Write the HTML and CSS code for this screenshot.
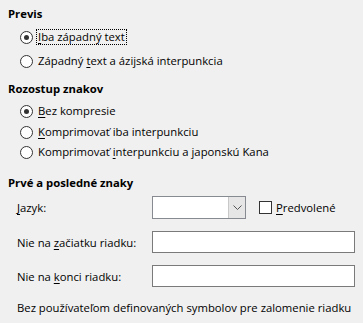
FILE: index.html
```html
<!DOCTYPE html>
<html lang="sk">
<head>
<meta charset="utf-8">
<link rel="stylesheet" href="styles.css">
</head>
<body>
<div class="page">
  <div class="heading h1">Previs</div>
  <div class="radio r1"><span class="rb checked"></span><span class="label focus"><u>I</u>ba západný text</span></div>
  <div class="radio r2"><span class="rb"></span><span class="label">Západný <u>t</u>ext a ázijská interpunkcia</span></div>

  <div class="heading h2">Rozostup znakov</div>
  <div class="radio r3"><span class="rb checked"></span><span class="label"><u>B</u>ez kompresie</span></div>
  <div class="radio r4"><span class="rb"></span><span class="label"><u>K</u>omprimovať iba interpunkciu</span></div>
  <div class="radio r5"><span class="rb"></span><span class="label">Komprimovať <u>i</u>nterpunkciu a japonskú Kana</span></div>

  <div class="heading h3">Prvé a posledné znaky</div>
  <div class="field f1">
    <span class="flabel"><u>J</u>azyk:</span>
    <span class="combo"><span class="combo-text"></span><span class="combo-btn"><svg width="9" height="5" viewBox="0 0 9 5"><path d="M0.5 0.5 L4.5 4.5 L8.5 0.5" fill="none" stroke="#555" stroke-width="1"/></svg></span></span>
    <span class="check"><span class="cb"></span><span class="label"><u>P</u>redvolené</span></span>
  </div>
  <div class="field f2">
    <span class="flabel">Nie na <u>z</u>ačiatku riadku:</span>
    <span class="input"></span>
  </div>
  <div class="field f3">
    <span class="flabel">Nie na <u>k</u>onci riadku:</span>
    <span class="input"></span>
  </div>
  <div class="note">Bez používateľom definovaných symbolov pre zalomenie riadku</div>
</div>
</body>
</html>
```
FILE: styles.css
```css
html, body {
  margin: 0;
  padding: 0;
  background: #f0f0f0;
}
body {
  font-family: "Open Sans", "Noto Sans", sans-serif;
  font-size: 11.3px;
  color: #000;
}
.page {
  display: flex;
  flex-direction: column;
  padding: 0 0 0 8px;
  width: 363px;
  box-sizing: border-box;
}
u {
  text-decoration: underline;
  text-underline-offset: 2px;
}
.heading {
  font-weight: bold;
  height: 16px;
  line-height: 16px;
}
.h1 { margin-top: 6px; }
.h2 { margin-top: 12px; }
.h3 { margin-top: 15px; }

.radio {
  display: flex;
  align-items: center;
  height: 16px;
  padding-left: 12px;
}
.r1 { margin-top: 7px; }
.r2 { margin-top: 8px; }
.r3 { margin-top: 6px; }
.r4 { margin-top: 5px; }
.r5 { margin-top: 4px; }

.rb {
  width: 11px;
  height: 11px;
  border: 1px solid #333;
  border-radius: 50%;
  background: #fff;
  box-sizing: content-box;
  position: relative;
  flex: none;
}
.rb.checked::after {
  content: "";
  position: absolute;
  left: 3px;
  top: 3px;
  width: 5px;
  height: 5px;
  border-radius: 50%;
  background: #333;
}
.label {
  margin-left: 5px;
  line-height: 14px;
  white-space: nowrap;
}
.label.focus {
  margin-left: 4px;
  outline: 1px dotted #000;
  outline-offset: 0;
  padding: 0 1px;
}

.field {
  display: flex;
  align-items: center;
  padding-left: 9px;
}
.f1 { margin-top: 5px; height: 23px; }
.f2 { margin-top: 12px; height: 22px; }
.f3 { margin-top: 12px; height: 22px; }
.flabel {
  width: 135px;
  flex: none;
  white-space: nowrap;
}
.combo {
  display: flex;
  width: 94px;
  height: 23px;
  border: 1px solid #878a90;
  box-sizing: border-box;
  background: #fff;
}
.combo-text { flex: 1; }
.combo-btn {
  width: 16px;
  background: #e6e6e6;
  border-left: 1px solid #c8c8c8;
  display: flex;
  align-items: center;
  justify-content: center;
}
.check {
  display: flex;
  align-items: center;
  margin-left: 13px;
}
.cb {
  width: 11px;
  height: 11px;
  border: 1px solid #333;
  background: #fff;
  flex: none;
}
.check .label { margin-left: 4px; }
.input {
  width: 203px;
  height: 22px;
  border: 1px solid #7a7a7a;
  box-sizing: border-box;
  background: #fff;
}
.note {
  margin-top: 13px;
  padding-left: 9px;
  white-space: nowrap;
  line-height: 16px;
}
```
